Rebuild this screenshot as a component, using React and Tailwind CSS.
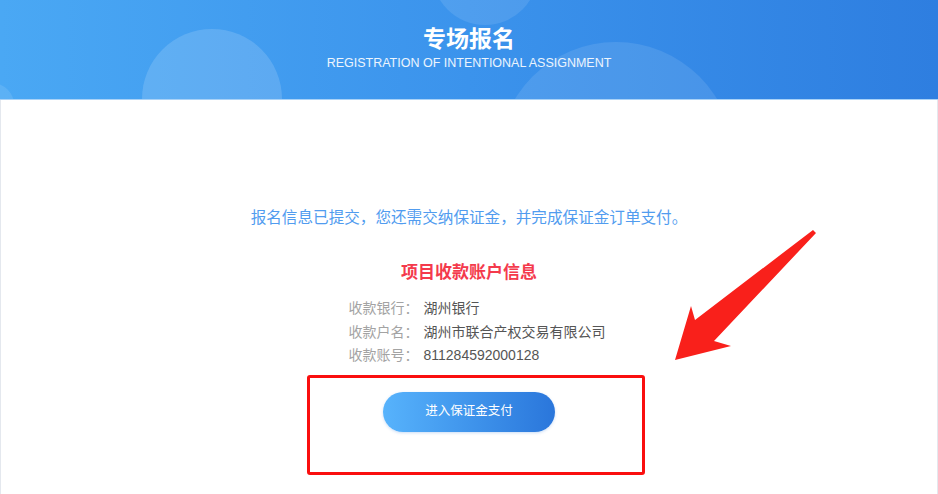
import React from "react";

const rows = [
  { label: "收款银行：", value: "湖州银行" },
  { label: "收款户名：", value: "湖州市联合产权交易有限公司" },
  { label: "收款账号：", value: "811284592000128" },
];

export default function App() {
  return (
    <div
      className="relative w-[938px] h-[494px] overflow-hidden bg-white"
      style={{ fontFamily: '"Liberation Sans", "Noto Sans CJK SC", sans-serif' }}
    >
      {/* header banner */}
      <header className="relative h-[100px] overflow-hidden border-b border-[#a9d2f7] bg-gradient-to-r from-[#4aa8f4] via-[#3b93ec] to-[#2e7ee0]">
        <div className="absolute left-[142px] top-[29px] w-[140px] h-[140px] rounded-full bg-white/15" />
        <div className="absolute left-[432px] top-[-81px] w-[106px] h-[106px] rounded-full bg-white/10" />
        <div className="absolute left-[498px] top-[42px] w-[236px] h-[236px] rounded-full bg-white/10" />
        <div className="absolute left-[-30px] top-[83px] w-[44px] h-[44px] rounded-full bg-white/10" />
        <div className="relative flex flex-col items-center pt-[25px] text-white">
          <h1 className="text-[23px] leading-[28px] font-bold">专场报名</h1>
          <p className="mt-[3px] text-[12.5px] leading-[14px] tracking-[0px] text-white/90">
            REGISTRATION OF INTENTIONAL ASSIGNMENT
          </p>
        </div>
      </header>

      {/* content */}
      <main className="h-[394px] border-x border-[#e4e8ee] flex flex-col items-center pt-[106px]">
        <p className="text-[15.6px] leading-[24px] text-[#519cef]">
          报名信息已提交，您还需交纳保证金，并完成保证金订单支付。
        </p>
        <h2 className="mt-[31px] text-[17px] leading-[24px] font-bold text-[#f43a4c]">
          项目收款账户信息
        </h2>
        <div className="mt-[12px] pl-[16px] flex flex-col text-[14px] leading-[23.5px]">
          {rows.map((r) => (
            <div key={r.label} className="flex">
              <span className="w-[75px] text-[#a3a3a3]">{r.label}</span>
              <span className="text-[#555]">{r.value}</span>
            </div>
          ))}
        </div>
        <button className="mt-[24px] w-[172px] h-[40px] rounded-full bg-gradient-to-r from-[#57b3fc] to-[#2a76db] text-white text-[12.5px] shadow-[0_1px_3px_rgba(42,118,219,0.25)]">
          进入保证金支付
        </button>
      </main>

      {/* annotation overlay */}
      <div className="absolute left-[307px] top-[375px] w-[338px] h-[100px] rounded-[3px] border-[3px] border-[#fa0f0f]" />
      <svg className="absolute left-0 top-0" width="938" height="494" viewBox="0 0 938 494">
        <polygon
          points="813,230 695,320 691,306 675,360 731,346 714,341 816,233"
          fill="#f9201b"
        />
      </svg>
    </div>
  );
}
